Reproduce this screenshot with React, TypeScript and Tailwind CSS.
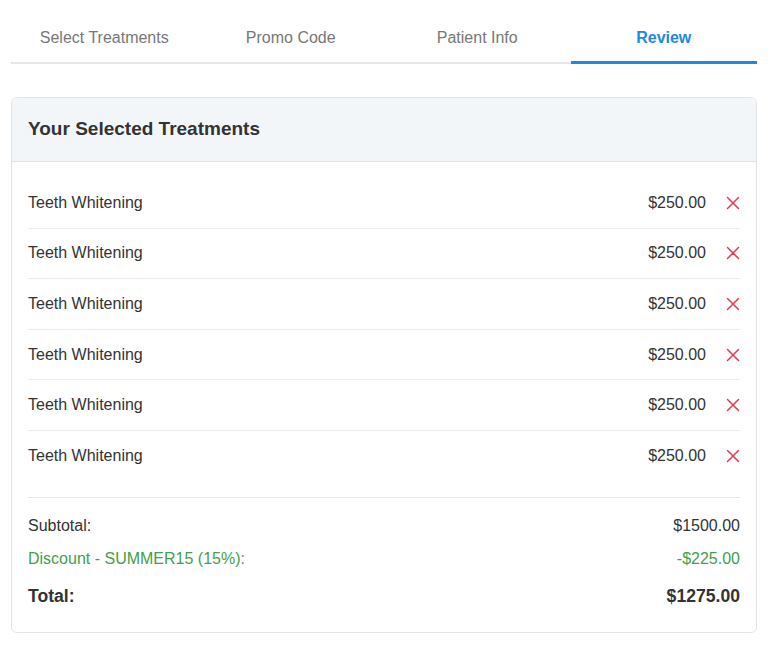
const tabs = ["Select Treatments", "Promo Code", "Patient Info", "Review"];

const treatments = Array.from({ length: 6 }, (_, i) => ({
  id: i,
  name: "Teeth Whitening",
  price: 250,
}));

const XIcon = () => (
  <svg width="14" height="14" viewBox="0 0 14 14" fill="none">
    <path d="M1.5 1.5 L12.5 12.5 M12.5 1.5 L1.5 12.5" stroke="#e53950" strokeWidth="1.5" strokeLinecap="round" />
  </svg>
);

const App = () => {
  const subtotal = treatments.reduce((s, t) => s + t.price, 0);
  const discount = subtotal * 0.15;

  return (
    <div className="min-h-screen bg-white pl-[11px] pr-[17px] pt-[10px] text-[#333] font-['Liberation_Sans',Arial,sans-serif]">
      <div className="flex border-b-2 border-[#e6e6e6]">
        {tabs.map((tab, i) => {
          const active = i === tabs.length - 1;
          return (
            <div
              key={tab}
              className={`flex-1 text-center text-base leading-6 pt-[16px] -mb-[2px] ${
                active
                  ? "font-bold text-[#1e88e5] border-b-[3px] border-[#1e88e5] pb-[11px]"
                  : "text-[#777] pb-[12px]"
              }`}
            >
              {tab}
            </div>
          );
        })}
      </div>

      <div className="mt-[33px] rounded-md border border-[#e3e3e3] overflow-hidden">
        <div className="bg-[#f3f6f9] border-b border-[#e3e3e3] px-4 pt-[19px] pb-[20px]">
          <h2 className="text-[19px] leading-6 font-bold text-[#333]">Your Selected Treatments</h2>
        </div>

        <div className="px-4 pt-4 pb-[22px]">
          <ul>
            {treatments.map((t, i) => (
              <li
                key={t.id}
                className={`flex items-center py-[12.8px] text-base leading-6 ${
                  i < treatments.length - 1 ? "border-b border-[#ececec]" : ""
                }`}
              >
                <span className="flex-1">{t.name}</span>
                <span>${t.price.toFixed(2)}</span>
                <button className="ml-5 flex items-center justify-center">
                  <XIcon />
                </button>
              </li>
            ))}
          </ul>

          <div className="mt-4 border-t border-[#e6e6e6] pt-4 text-base leading-6">
            <div className="flex justify-between mb-[9px]">
              <span>Subtotal:</span>
              <span>${subtotal.toFixed(2)}</span>
            </div>
            <div className="flex justify-between text-[#43a047]">
              <span>Discount - SUMMER15 (15%):</span>
              <span>-${discount.toFixed(2)}</span>
            </div>
            <div className="flex justify-between mt-3 text-[17.6px] leading-[27px] font-bold">
              <span>Total:</span>
              <span>${(subtotal - discount).toFixed(2)}</span>
            </div>
          </div>
        </div>
      </div>
    </div>
  );
};

export default App;
